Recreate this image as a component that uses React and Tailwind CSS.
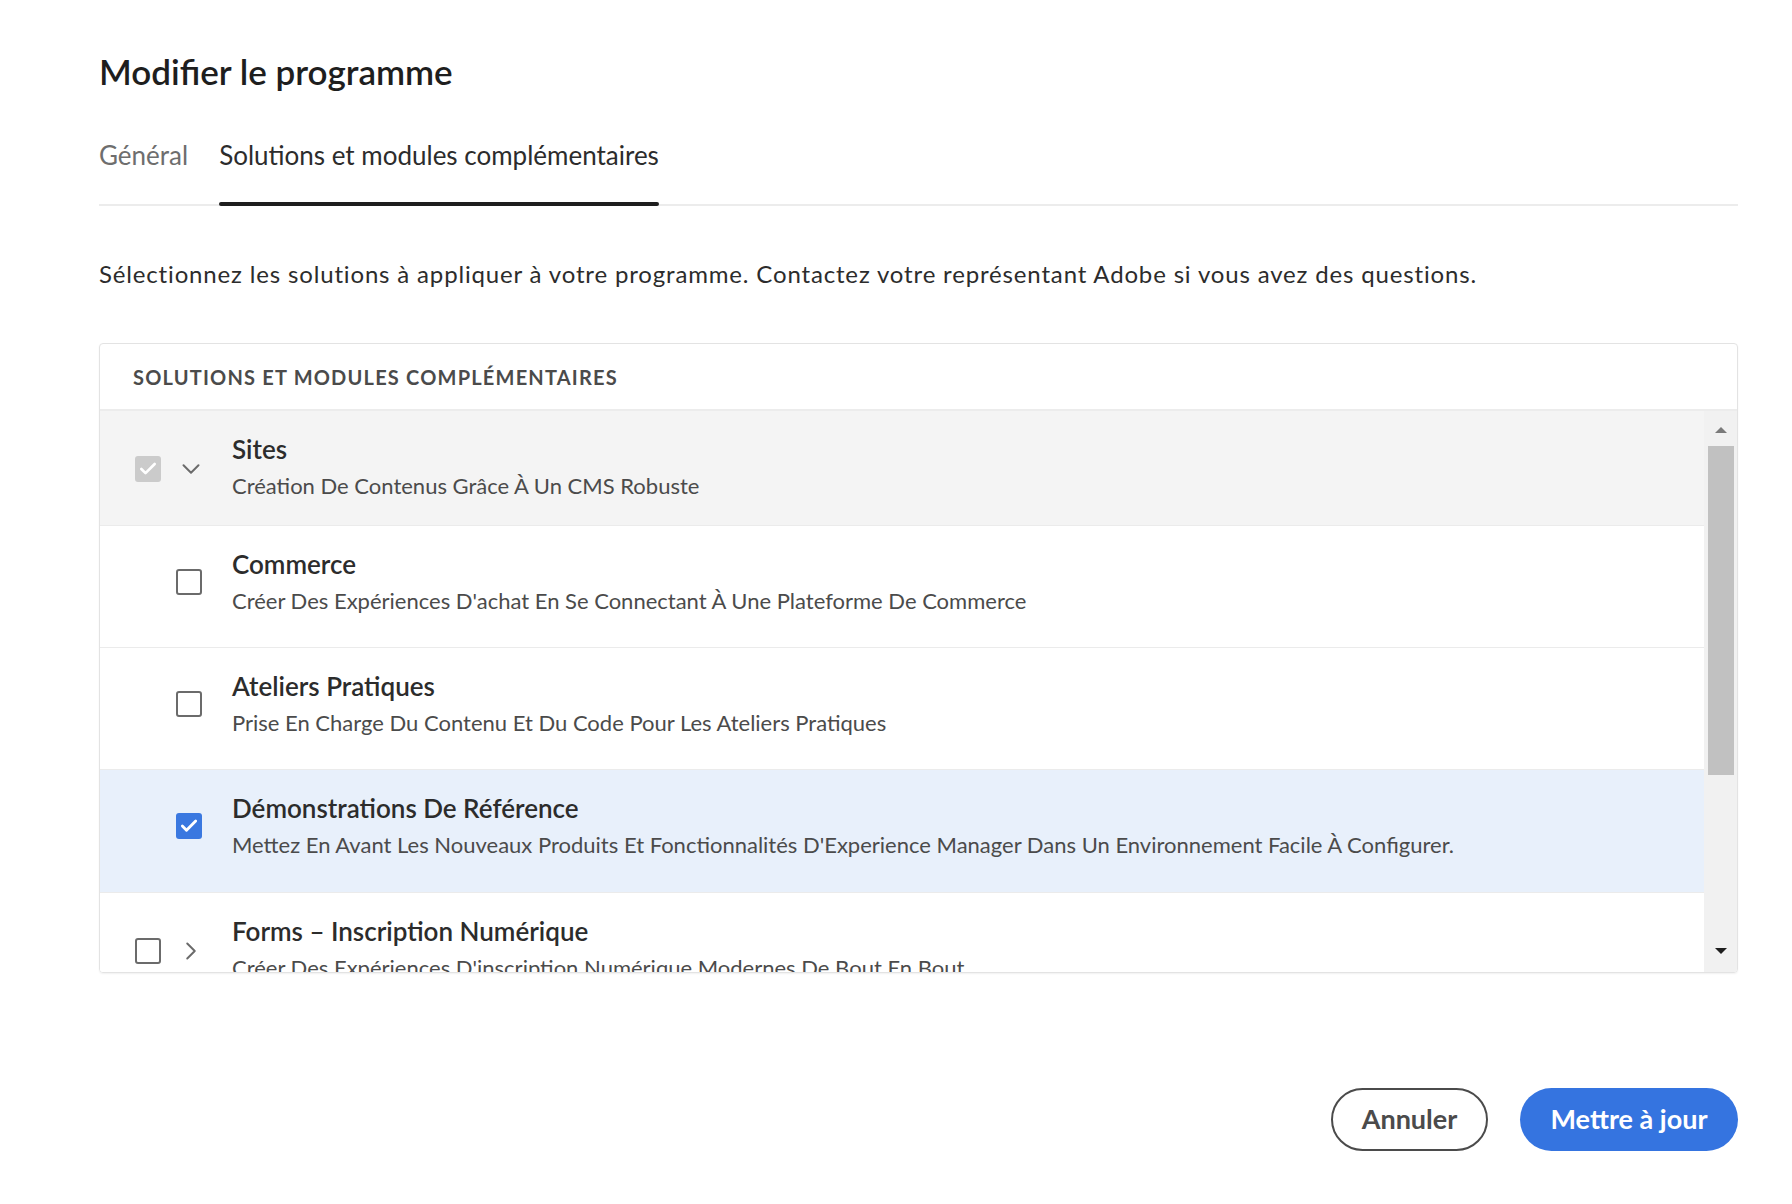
import { ChevronDown, ChevronRight, Check } from "lucide-react";

const rows = [
  {
    title: "Sites",
    desc: "Création De Contenus Grâce À Un CMS Robuste",
    state: "disabled",
    chevron: "down",
    h: "h-[115px]",
    bg: "bg-[#f4f4f4]",
  },
  {
    title: "Commerce",
    desc: "Créer Des Expériences D'achat En Se Connectant À Une Plateforme De Commerce",
    state: "off",
    child: true,
    h: "h-[122px]",
    bg: "bg-white",
  },
  {
    title: "Ateliers Pratiques",
    desc: "Prise En Charge Du Contenu Et Du Code Pour Les Ateliers Pratiques",
    state: "off",
    child: true,
    h: "h-[122px]",
    bg: "bg-white",
  },
  {
    title: "Démonstrations De Référence",
    desc: "Mettez En Avant Les Nouveaux Produits Et Fonctionnalités D'Experience Manager Dans Un Environnement Facile À Configurer.",
    state: "on",
    child: true,
    h: "h-[123px]",
    bg: "bg-[#e8f0fb]",
  },
  {
    title: "Forms – Inscription Numérique",
    desc: "Créer Des Expériences D'inscription Numérique Modernes De Bout En Bout",
    state: "off",
    chevron: "right",
    h: "h-[122px]",
    bg: "bg-white",
  },
];

function Box({ state }) {
  if (state === "disabled") {
    return (
      <div className="flex h-[26px] w-[26px] items-center justify-center rounded-[3px] bg-[#cbcbcb]">
        <Check size={20} strokeWidth={3.2} className="text-white" />
      </div>
    );
  }
  if (state === "on") {
    return (
      <div className="flex h-[26px] w-[26px] items-center justify-center rounded-[3px] bg-[#3a78e0]">
        <Check size={20} strokeWidth={3.4} className="text-white" />
      </div>
    );
  }
  return <div className="h-[26px] w-[26px] rounded-[3px] border-2 border-[#6b6b6b] bg-white" />;
}

function Row({ row }) {
  return (
    <div className={`flex items-start border-b border-[#ebebeb] ${row.h} ${row.bg}`}>
      <div className="flex w-[132px] shrink-0 items-center pt-[43px]">
        {row.child ? (
          <div className="ml-[76px]">
            <Box state={row.state} />
          </div>
        ) : (
          <div className="ml-[35px] flex items-center gap-[15px]">
            <Box state={row.state} />
            {row.chevron === "down" ? (
              <ChevronDown size={30} strokeWidth={1.6} className="text-[#6b6b6b]" />
            ) : (
              <ChevronRight size={30} strokeWidth={1.6} className="text-[#6b6b6b]" />
            )}
          </div>
        )}
      </div>
      <div className="pt-[20px]">
        <div className="text-[26px] leading-[36px] font-semibold text-[#2c2c2c]">{row.title}</div>
        <div className="text-[22px] leading-[38px] text-[#4b4b4b]">{row.desc}</div>
      </div>
    </div>
  );
}

export default function App() {
  return (
    <div className="min-h-screen bg-white pl-[99px] pr-[54px] pt-[49px] font-['Lato',sans-serif]">
      <h1 className="text-[35px] leading-[44px] font-semibold text-[#1e1e1e]">Modifier le programme</h1>

      <div className="mt-[44px] flex gap-[31px] border-b-2 border-[#ececec]">
        <div className="pb-[31px] text-[26px] leading-[36px] text-[#6e6e6e]">Général</div>
        <div className="relative pb-[31px] text-[26px] leading-[36px] text-[#2c2c2c]">
          Solutions et modules complémentaires
          <div className="absolute -bottom-[2px] left-0 right-0 h-[4px] rounded-full bg-[#1e1e1e]" />
        </div>
      </div>

      <p className="mt-[52px] text-[24px] leading-[32px] tracking-[0.035em] text-[#2c2c2c]">
        Sélectionnez les solutions à appliquer à votre programme. Contactez votre représentant Adobe si vous avez des questions.
      </p>

      <div className="mt-[53px] overflow-hidden rounded-[4px] border border-[#e3e3e3] shadow-[0_1px_2px_rgba(0,0,0,0.06)]">
        <div className="flex h-[67px] items-center border-b-2 border-[#ececec] pl-[33px] text-[20px] font-bold uppercase tracking-[0.06em] text-[#4b4b4b]">
          Solutions et modules complémentaires
        </div>
        <div className="flex h-[561px]">
          <div className="flex-1 overflow-hidden">
            {rows.map((r) => (
              <Row key={r.title} row={r} />
            ))}
          </div>
          <div className="flex w-[33px] shrink-0 flex-col items-center bg-[#f1f1f1] pt-[16px] pb-[18px]">
            <div className="h-0 w-0 border-x-[6px] border-b-[6px] border-x-transparent border-b-[#7a7a7a]" />
            <div className="mt-[13px] h-[329px] w-[26px] bg-[#c1c1c1]" />
            <div className="flex-1" />
            <div className="h-0 w-0 border-x-[6px] border-t-[6px] border-x-transparent border-t-[#1e1e1e]" />
          </div>
        </div>
      </div>

      <div className="mt-[115px] flex justify-end gap-[32px]">
        <button className="h-[63px] w-[157px] rounded-full border-2 border-[#4b4b4b] text-[27px] font-bold text-[#4b4b4b]">
          Annuler
        </button>
        <button className="h-[63px] w-[218px] rounded-full bg-[#3574e0] text-[27px] font-bold text-white">
          Mettre à jour
        </button>
      </div>
    </div>
  );
}
